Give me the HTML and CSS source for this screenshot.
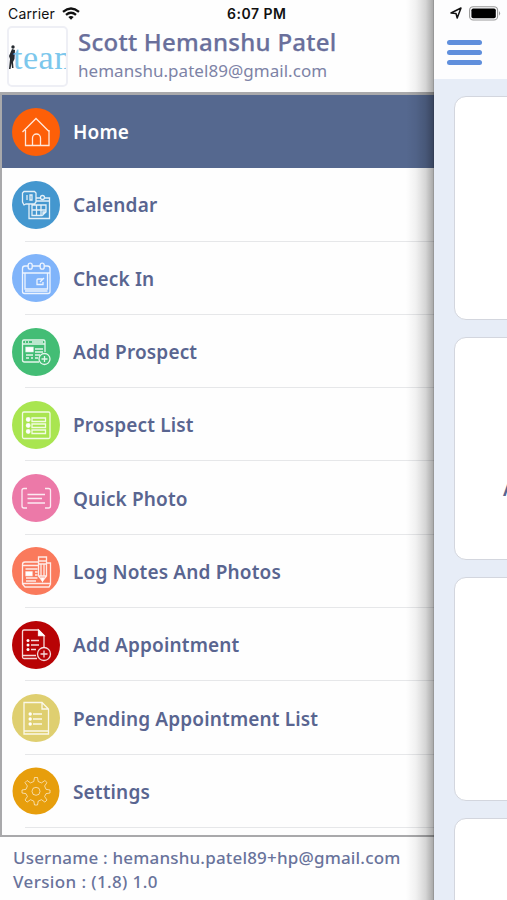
FILE: index.html
```html
<!DOCTYPE html>
<html lang="en">
<head>
<meta charset="utf-8">
<meta name="viewport" content="width=device-width, initial-scale=1">
<title>Menu</title>
<link rel="stylesheet" href="styles.css">
</head>
<body>
<div class="screen">
  <aside class="drawer">
    <div class="status">
      <span class="carrier">Carrier</span>
      <svg class="wifi" width="18" height="13" viewBox="0 0 18 13"><g fill="none" stroke="#111" stroke-width="2.3"><path d="M1 4.8Q9-1.900 17 4.800"/><path d="M4 7.900Q9 3.700 14 7.900"/></g><path d="M6.300 9.900Q9 8 11.700 9.900L9 12.700Z" fill="#111"/></svg>
      <span class="time">6:07 PM</span>
    </div>
    <header class="profile">
      <div class="logo">
        <svg class="figure" width="8" height="25" viewBox="0 0 8 25"><circle cx="4" cy="2" r="1.700" fill="#252a30"/><path d="M3 4L6 5 5.500 14 4 17 4.500 23H3L2.500 18 1.500 24H0L1 14 0 11Z" fill="#252a30"/></svg>
        <span class="logo-text">team</span>
      </div>
      <div class="who">
        <div class="name"><span>Scott Hemanshu Patel</span></div>
        <div class="email"><span>hemanshu.patel89@gmail.com</span></div>
      </div>
    </header>
    <nav class="menu">
      <a class="item active">
        <svg class="icon" viewBox="0 0 48 48"><circle cx="24" cy="24" r="24" fill="#fd5f08"/><path d="M10.500 24L24 10.500 37.500 24M13.500 22V37.500H37V22M20.500 37V30a4 4 0 0 1 8 0V37"/></svg>
        <span class="label">Home</span>
      </a>
      <a class="item">
        <svg class="icon" viewBox="0 0 48 48"><circle cx="24" cy="24" r="24" fill="#4497cf"/><path d="M12 10.500H22.500L24 12V21L22.500 23H14L12 24 10.500 21V12Z M15 14V19M18 14V19H20V14H18V17M24 17H28.500M33 17H37.500V20H24M17 23V37.500H37.500V20M20 24V34.500H30L34 31V24ZM20 29H34M24.500 24V34.500M29 24V34.500M34 31H31V34.500"/><circle cx="30.500" cy="16.500" r="2"/></svg>
        <span class="label">Calendar</span>
      </a>
      <a class="item">
        <svg class="icon" viewBox="0 0 48 48"><circle cx="24" cy="24" r="24" fill="#80b4fa"/><path d="M16 12H13Q10.500 12 10.500 14.500V37.500Q10.500 39.500 12.500 39.500H36Q38 39.500 38 37.500V14.500Q38 12 35.500 12H32.500M20.500 12H28M10.500 19H38M13 19V35H35.500V19M13 37H35.500M31 25H26Q25 25 25 26V30.500H31V28M28 28L32 24"/><rect x="16.200" y="9.200" width="4" height="6" rx="2"/><rect x="28.200" y="9.200" width="4" height="6" rx="2"/></svg>
        <span class="label">Check In</span>
      </a>
      <a class="item">
        <svg class="icon" viewBox="0 0 48 48"><circle cx="24" cy="24" r="24" fill="#43bd75"/><path d="M27 34H12.500Q10.500 34 10.500 32V13.500Q10.500 12 12 12H31.500Q33 12 33 13.500V24M10.500 16H33M13 14H14M16 14H17M20 14H31M23 21H31M23 24H31M14 27H21M23 27H28M14 30H17M19 30H21M23 30H26"/><path d="M14 19.500H21V23.500H14Z" fill="#fff"/><circle cx="32.500" cy="31" r="5.500"/><path d="M32.500 28V34M29.500 31H35.500"/></svg>
        <span class="label">Add Prospect</span>
      </a>
      <a class="item">
        <svg class="icon" viewBox="0 0 48 48"><circle cx="24" cy="24" r="24" fill="#a9e550"/><rect x="10.500" y="11" width="27.500" height="26.500" rx="1.500"/><path d="M20 17H33.500V20.500H20ZM20 23H33.500V26.500H20ZM20 29H33.500V32.500H20Z"/><g fill="#fff"><circle cx="16.200" cy="18.500" r="1.800"/><circle cx="16.200" cy="24.500" r="1.800"/><circle cx="16.200" cy="30.500" r="1.800"/></g></svg>
        <span class="label">Prospect List</span>
      </a>
      <a class="item">
        <svg class="icon" viewBox="0 0 48 48"><circle cx="24" cy="24" r="24" fill="#ec79a8"/><path d="M15 14.500H12Q10 14.500 10 16.500V32Q10 34 12 34H15M33 14.500H36.500Q38.500 14.500 38.500 16.500V32Q38.500 34 36.500 34H33M15.500 20.500H33M15.500 24.500H30M15.500 29H33"/></svg>
        <span class="label">Quick Photo</span>
      </a>
      <a class="item">
        <svg class="icon" viewBox="0 0 48 48"><circle cx="24" cy="24" r="24" fill="#fa7a5c"/><path d="M26 15H13Q10.500 15 10.500 17.500V37L13 40H37L38.500 37V16H35M10.500 18.500H26M10.500 36.500H38.500M13.500 22H25.500M23 25H25.500M23 28H25.500M14 31H25.500M14 34H24M26.500 10H34.500V29L30.500 34 26.500 29ZM26.500 14H34.500M26.500 17H34.500M29 17V29M32 17V29M26.500 29H34.500"/><path d="M14 25H20V28.500H14ZM29.500 31H31.500L30.500 34Z" fill="#fff"/></svg>
        <span class="label">Log Notes And Photos</span>
      </a>
      <a class="item">
        <svg class="icon" viewBox="0 0 48 48"><circle cx="24" cy="24" r="24" fill="#b80305"/><path d="M25 37.500H12Q10.500 37.500 10.500 36V10.500Q10.500 9 12 9H26.500L32 14.500V26.500M10.500 34.500H24M19 19.500H27M19 24H27M19 28.500H24"/><path d="M26.500 9V14.500H32Z" fill="#fff"/><g fill="#fff" stroke="none"><circle cx="16" cy="19.500" r="1.500"/><circle cx="16" cy="24" r="1.500"/><circle cx="16" cy="28.500" r="1.500"/></g><circle cx="32" cy="33" r="6.500"/><path d="M32 29.500V36.500M28.500 33H35.500"/></svg>
        <span class="label">Add Appointment</span>
      </a>
      <a class="item">
        <svg class="icon" viewBox="0 0 48 48"><circle cx="24" cy="24" r="24" fill="#dfcf70"/><path d="M12 8.500H30L36.500 15V40H12ZM30 8.500V15H36.500M12 37H36.500M21 20H30M21 25H30M21 30H30"/><g fill="#fff" stroke="none"><circle cx="18.200" cy="20" r="1.700"/><circle cx="18.200" cy="25" r="1.700"/><circle cx="18.200" cy="30" r="1.700"/></g></svg>
        <span class="label">Pending Appointment List</span>
      </a>
      <a class="item">
        <svg class="icon gear" viewBox="0 0 48 48"><circle cx="24" cy="24" r="23.500" fill="#e79e0c"/><path d="M22.500 10.500H25.500L26.200 14.500 29.500 15.900 32.900 13.500 35 15.600 32.600 19 34 22.300 38 23V26L34 26.700 32.600 29.500 35 33 32.900 35.100 29.500 32.700 26.200 34.100 25.500 38H22.500L21.800 34.100 18.500 32.700 15.100 35.100 13 33 15.400 29.500 14 26.700 10 26V23L14 22.300 15.400 19 13 15.600 15.100 13.500 18.500 15.900 21.800 14.500Z"/><circle cx="24" cy="24.300" r="4"/></svg>
        <span class="label">Settings</span>
      </a>
    </nav>
    <footer class="footer">
      <div><span class="user">Username : hemanshu.patel89+hp@gmail.com</span></div>
      <div><span class="version">Version : (1.8) 1.0</span></div>
    </footer>
    <div class="shade"></div>
  </aside>
  <main class="page">
    <div class="topbar">
      <div class="indicators">
        <svg width="12" height="12" viewBox="0 0 12 12"><path d="M1 6L11 1 7.200 11 6 6.500Z" fill="none" stroke="#111" stroke-width="1.500" stroke-linejoin="round"/></svg>
        <svg width="32" height="15" viewBox="0 0 32 15"><rect x=".6" y=".7" width="28" height="13.300" rx="3.600" fill="none" stroke="#999" stroke-width="1.100"/><rect x="2.400" y="2.500" width="24.400" height="9.700" rx="1.800"/><path d="M30 5Q32.200 7.300 30 9.700Z" fill="#999"/></svg>
      </div>
      <div class="burger"><i></i><i></i><i></i></div>
    </div>
    <div class="cards">
      <section class="card"></section>
      <section class="card"><span>Appointments</span></section>
      <section class="card"></section>
      <section class="card"></section>
    </div>
  </main>
</div>
</body>
</html>
```
FILE: styles.css
```css
* { box-sizing: border-box; }
body { margin: 0; background: #fff; font-family: "Noto Sans", sans-serif; color: #596590; }
.screen { display: flex; width: 507px; height: 900px; overflow: hidden; }
.drawer { position: relative; flex: 0 0 434px; display: flex; flex-direction: column; height: 900px; background: #fefefe; white-space: nowrap; }
.status { display: flex; align-items: center; height: 26px; padding: 1px 0 0 8px; font: 14px/26px Inter, sans-serif; color: #111; }
.carrier { width: 54px; letter-spacing: .15px; }
.wifi { flex: none; }
.time { margin-left: 147px; font-weight: 600; letter-spacing: .5px; }
.profile { display: flex; height: 66px; padding-left: 7px; }
.logo { display: flex; align-items: center; width: 61px; height: 61px; border: 2px solid #eeeff5; border-radius: 5px; background: #fff; overflow: hidden; }
.figure { flex: none; margin-top: 2px; }
.logo-text { flex: none; margin: 2px 0 0 -4px; font: 34px/36px "Liberation Serif", serif; letter-spacing: .5px; color: #7cc7ec; }
.who { padding-left: 10px; }
.name { height: 30px; font-size: 24px; line-height: 31px; font-weight: 500; letter-spacing: .26px; color: #696f9b; -webkit-text-stroke: .25px #696f9b; }
.email { height: 28px; font-size: 17px; line-height: 29px; letter-spacing: .04px; color: #7d83a6; }
.menu { display: flex; flex-direction: column; height: 745px; border: solid #a9a9ab; border-width: 3px 0 2px 2px; overflow: hidden; }
.item { position: relative; flex: 0 0 73.300px; display: flex; align-items: center; gap: 13px; padding-left: 10px; }
.item::after { content: ""; position: absolute; left: 23px; right: 0; bottom: 0; height: 1px; background: #e6e7e9; }
.active { background: #55688f; color: #fff; }
.active::after { display: none; }
.icon { flex: none; width: 48px; height: 48px; fill: none; stroke: #fff; stroke-opacity: .85; stroke-width: 1.300; }
.icon > circle:first-child { stroke: none; }
.gear { stroke-opacity: .6; stroke-width: 1; }
.label { padding-top: 1px; font-size: 19px; line-height: 28px; font-weight: 600; letter-spacing: .15px; }
.footer { padding: 9px 0 0 13px; font-size: 17px; line-height: 24px; font-weight: 500; letter-spacing: .18px; color: #69739b; }
.version { letter-spacing: .38px; }
.shade { position: absolute; top: 0; right: 0; width: 28px; height: 900px; background: linear-gradient(90deg, rgba(0,0,0,0), rgba(0,0,0,.05) 35%, rgba(0,0,0,.16) 70%, rgba(0,0,0,.32) 95%, rgba(0,0,0,.45)); }
.page { flex: 1; height: 900px; background: #e7edf7; overflow: hidden; }
.topbar { height: 79px; background: #fdfdfe; }
.indicators { display: flex; align-items: center; gap: 7px; height: 26px; padding-left: 16px; }
.burger { display: flex; flex-direction: column; gap: 5px; padding: 14px 0 0 13px; }
.burger i { width: 35px; height: 5px; border-radius: 2.500px; background: #608fdc; }
.cards { display: flex; flex-direction: column; gap: 17px; padding: 17px 0 0 20px; }
.card { flex: 0 0 223.500px; width: 300px; padding: 138px 0 0 48px; border: 1px solid #d3d6de; border-radius: 12px; background: #fff; font-size: 19px; line-height: 26px; font-weight: 600; }
```
